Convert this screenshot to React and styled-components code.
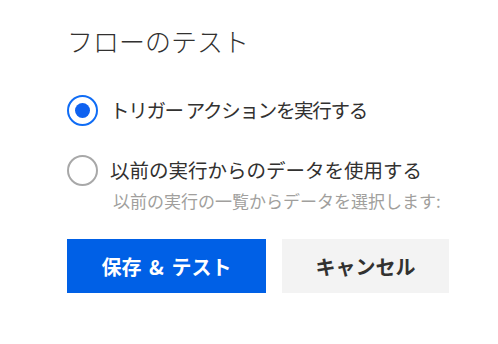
import styled, { createGlobalStyle } from "styled-components";

const GlobalStyle = createGlobalStyle`
  body {
    margin: 0;
    background: #ffffff;
    font-family: "Noto Sans CJK JP", "Noto Sans", sans-serif;
    color: #323130;
  }
`;

const Panel = styled.div`
  width: 498px;
  height: 344px;
  box-sizing: border-box;
  padding: 22px 0 0 67px;
  display: flex;
  flex-direction: column;
`;

const Title = styled.h1`
  margin: 0;
  font-size: 26px;
  font-weight: 300;
  line-height: 38px;
  color: #323130;
`;

const Options = styled.div`
  margin-top: 34px;
  display: flex;
  flex-direction: column;
  gap: 28px;
`;

const Option = styled.label`
  display: flex;
  align-items: center;
  gap: 12px;
  cursor: pointer;
`;

const Radio = styled.span`
  width: 31px;
  height: 31px;
  box-sizing: border-box;
  border-radius: 50%;
  border: 2px solid ${(p) => (p.$checked ? "#0f6cf5" : "#a8a8a8")};
  display: flex;
  align-items: center;
  justify-content: center;
  flex-shrink: 0;

  &::after {
    content: "";
    width: 15px;
    height: 15px;
    border-radius: 50%;
    background: #0f62f0;
    display: ${(p) => (p.$checked ? "block" : "none")};
  }
`;

const OptionText = styled.span`
  font-size: 19.5px;
  line-height: 32px;
  letter-spacing: ${(p) => (p.$tight ? "-1.3px" : "0")};
  color: #323130;
`;

const Hint = styled.div`
  margin: 3px 0 0 46px;
  font-size: 17px;
  line-height: 24px;
  color: #a19f9d;
`;

const Buttons = styled.div`
  margin-top: 26px;
  display: flex;
  gap: 16px;
`;

const Button = styled.button`
  height: 54px;
  width: ${(p) => p.$width}px;
  border: none;
  border-radius: 0;
  font-family: inherit;
  font-size: 20px;
  font-weight: 700;
  word-spacing: 3px;
  background: ${(p) => (p.$primary ? "#0060e6" : "#f3f3f3")};
  color: ${(p) => (p.$primary ? "#ffffff" : "#323130")};
  cursor: pointer;
`;

export default function App() {
  return (
    <>
      <GlobalStyle />
      <Panel>
        <Title>フローのテスト</Title>
        <Options>
          <Option>
            <Radio $checked />
            <OptionText $tight>トリガー アクションを実行する</OptionText>
          </Option>
          <div>
            <Option>
              <Radio />
              <OptionText>以前の実行からのデータを使用する</OptionText>
            </Option>
            <Hint>以前の実行の一覧からデータを選択します:</Hint>
          </div>
        </Options>
        <Buttons>
          <Button $primary $width={199}>保存 &amp; テスト</Button>
          <Button $width={167}>キャンセル</Button>
        </Buttons>
      </Panel>
    </>
  );
}
